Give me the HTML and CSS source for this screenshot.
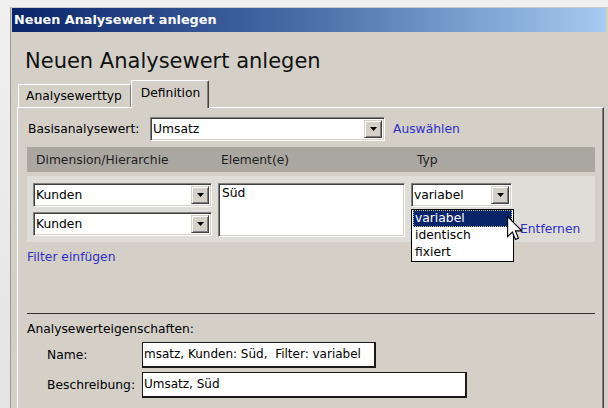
FILE: index.html
```html
<!DOCTYPE html>
<html lang="de">
<head>
<meta charset="utf-8">
<title>Neuen Analysewert anlegen</title>
<link rel="stylesheet" href="styles.css">
</head>
<body>
<div class="screen">
  <div class="window">
    <div class="titlebar">Neuen Analysewert anlegen</div>
    <div class="window-body">
      <h1 class="heading">Neuen Analysewert anlegen</h1>
      <div class="tabs">
        <div class="tab">Analysewerttyp</div>
        <div class="tab tab-active">Definition</div>
      </div>
      <div class="panel">
        <div class="basis-row">
          <span class="basis-label">Basisanalysewert:</span>
          <div class="combo combo-basis">
            <span class="combo-value">Umsatz</span>
            <span class="combo-btn"><svg width="7" height="4" viewBox="0 0 7 4"><path d="M0 0h7L3.5 4z" fill="#000"/></svg></span>
          </div>
          <a class="link link-select">Auswählen</a>
        </div>

        <div class="filter-grid filter-head">
          <span class="head-cell">Dimension/Hierarchie</span>
          <span class="head-cell">Element(e)</span>
          <span class="head-cell head-type">Typ</span>
        </div>

        <div class="filter-grid filter-row">
          <div class="dims">
            <div class="combo">
              <span class="combo-value">Kunden</span>
              <span class="combo-btn"><svg width="7" height="4" viewBox="0 0 7 4"><path d="M0 0h7L3.5 4z" fill="#000"/></svg></span>
            </div>
            <div class="combo">
              <span class="combo-value">Kunden</span>
              <span class="combo-btn"><svg width="7" height="4" viewBox="0 0 7 4"><path d="M0 0h7L3.5 4z" fill="#000"/></svg></span>
            </div>
          </div>
          <div class="elements">Süd</div>
          <div class="type-cell">
            <div class="combo">
              <span class="combo-value">variabel</span>
              <span class="combo-btn"><svg width="7" height="4" viewBox="0 0 7 4"><path d="M0 0h7L3.5 4z" fill="#000"/></svg></span>
            </div>
            <ul class="dropdown">
              <li class="option option-selected">variabel</li>
              <li class="option">identisch</li>
              <li class="option">fixiert</li>
            </ul>
            <svg class="pointer" width="15" height="25" viewBox="0 0 12 20">
              <path d="M0.5 0.5V16.5L4.3 12.8L6.8 18.8L9.2 17.8L6.7 11.9H11.8Z" fill="#fff" stroke="#000" stroke-width="0.9" stroke-linejoin="miter"/>
            </svg>
          </div>
          <a class="link link-remove">Entfernen</a>
        </div>

        <a class="link link-add">Filter einfügen</a>

        <div class="props">
          <div class="props-title">Analysewerteigenschaften:</div>
          <div class="prop-row">
            <span class="prop-label">Name:</span>
            <div class="field field-name">msatz, Kunden: Süd,  Filter: variabel</div>
          </div>
          <div class="prop-row">
            <span class="prop-label">Beschreibung:</span>
            <div class="field field-desc">Umsatz, Süd</div>
          </div>
        </div>
      </div>
    </div>
  </div>
</div>
</body>
</html>
```

FILE: styles.css
```css
* {
  box-sizing: border-box;
}

html,
body {
  margin: 0;
  padding: 0;
}

body {
  font-family: "DejaVu Sans", "Liberation Sans", sans-serif;
  font-size: 12.3px;
  color: #000;
  background: #ececec;
}

.screen {
  width: 608px;
  height: 408px;
  overflow: hidden;
  background: linear-gradient(to bottom, #f0f0f0, #e4e4e4);
  padding: 7px 0 0 10px;
}

/* Dialog window frame */
.window {
  width: 598px;
  height: 401px;
  background: #d4d0c8;
  border-left: 1px solid #9c9a95;
  border-top: 1px solid #c9c9c9;
  padding: 0 2px 0 1px;
  display: flex;
  flex-direction: column;
}

.titlebar {
  height: 24px;
  line-height: 24px;
  padding-left: 2px;
  font-weight: bold;
  font-size: 12.8px;
  color: #fff;
  background: linear-gradient(to right, #0a246a 0%, #4a6ea8 50%, #a6caf0 100%);
  white-space: nowrap;
}

.window-body {
  flex: 1;
  display: flex;
  flex-direction: column;
  padding: 0 2px 0 5px;
}

.heading {
  margin: 17px 0 0 8px;
  font-size: 21px;
  line-height: 24px;
  font-weight: normal;
  color: #111;
}

/* Tab strip */
.tabs {
  display: flex;
  align-items: flex-end;
  height: 27px;
  margin-top: 7px;
  padding-left: 1px;
  position: relative;
  z-index: 1;
}

.tab {
  height: 23px;
  padding: 0 8px 0 7px;
  line-height: 22px;
  border: 1px solid #fff;
  border-bottom: none;
  border-right: 1px solid #808080;
  border-radius: 2px 2px 0 0;
  background: #d4d0c8;
  white-space: nowrap;
}

.tab-active {
  height: 28px;
  margin-bottom: -1px;
  padding: 0 8px 0 9px;
  line-height: 24px;
  border-left: 1px solid #fff;
  border-right: 1px solid #404040;
  box-shadow: inset -1px 0 #808080;
}

/* Tab page */
.panel {
  flex: 1;
  border-top: 1px solid #fff;
  border-left: 1px solid #fff;
  border-right: 1px solid #404040;
  box-shadow: inset -1px 0 #808080;
  padding: 9px 8px 0 9px;
  display: flex;
  flex-direction: column;
}

.basis-row {
  display: flex;
  align-items: center;
  height: 24px;
}

.basis-label {
  width: 123px;
  padding-left: 1px;
}

/* Classic sunken combo box */
.combo {
  height: 24px;
  display: flex;
  align-items: stretch;
  background: #fff;
  border: 1px solid;
  border-color: #808080 #fff #fff #808080;
  box-shadow: inset 1px 1px #404040, inset -1px -1px #d4d0c8;
  padding: 2px;
}

.combo-basis {
  width: 235px;
}

.combo-value {
  flex: 1;
  line-height: 18px;
  padding-left: 0;
  white-space: nowrap;
  overflow: hidden;
}

.combo-btn {
  width: 18px;
  display: flex;
  align-items: center;
  justify-content: center;
  background: #d4d0c8;
  border: 1px solid;
  border-color: #d4d0c8 #404040 #404040 #d4d0c8;
  box-shadow: inset 1px 1px #fff, inset -1px -1px #808080;
}

.link {
  color: #2f2fc4;
  text-decoration: none;
  white-space: nowrap;
}

.link-select {
  margin-left: 8px;
}

/* Filter table */
.filter-grid {
  display: grid;
  grid-template-columns: 179px 187px 101px 1fr;
  column-gap: 6px;
  padding-left: 6px;
}

.filter-head {
  margin-top: 6px;
  height: 25px;
  align-items: center;
  background: #aaa7a1;
  color: #1e1e1e;
}

.head-cell {
  padding-left: 3px;
  white-space: nowrap;
}

.head-type {
  padding-left: 6px;
}

.filter-row {
  margin-top: 4px;
  padding-top: 7px;
  padding-bottom: 5px;
  background: #dfddd8;
}

.dims {
  display: flex;
  flex-direction: column;
  gap: 5px;
}

.elements {
  height: 54px;
  background: #fff;
  border: 1px solid;
  border-color: #808080 #fff #fff #808080;
  box-shadow: inset 1px 1px #404040, inset -1px -1px #d4d0c8;
  padding: 1px 3px;
  line-height: 16px;
}

.type-cell {
  position: relative;
}

.dropdown {
  position: absolute;
  left: 0;
  top: 26px;
  width: 103px;
  margin: 0;
  padding: 0 1px;
  list-style: none;
  background: #fff;
  border: 1px solid #000;
  z-index: 2;
}

.option {
  height: 17px;
  line-height: 16px;
  padding-left: 2px;
}

.option-selected {
  background: #0a246a;
  color: #fff;
  outline: 1px dotted #c9c08a;
  outline-offset: -1px;
}

.pointer {
  position: absolute;
  left: 96px;
  top: 33px;
  z-index: 3;
}

.link-remove {
  align-self: end;
  padding-left: 2px;
  line-height: 15px;
}

.link-add {
  margin-top: 8px;
  line-height: 15px;
  align-self: flex-start;
}

/* Properties section */
.props {
  margin-top: 48px;
  border-top: 1px solid #333;
}

.props-title {
  margin-top: 8px;
  line-height: 15px;
}

.prop-row {
  display: flex;
  align-items: center;
  height: 26px;
  margin-top: 5px;
  padding-left: 20px;
}

.prop-row + .prop-row {
  margin-top: 4px;
}

.prop-label {
  width: 95px;
  white-space: nowrap;
}

.field {
  height: 26px;
  line-height: 22px;
  font-size: 12px;
  background: #fff;
  border: 1px solid #1a1a1a;
  border-right-width: 2px;
  border-bottom-width: 2px;
  padding-left: 1px;
  white-space: pre;
  overflow: hidden;
}

.field-name {
  width: 234px;
}

.field-desc {
  width: 325px;
}
```
